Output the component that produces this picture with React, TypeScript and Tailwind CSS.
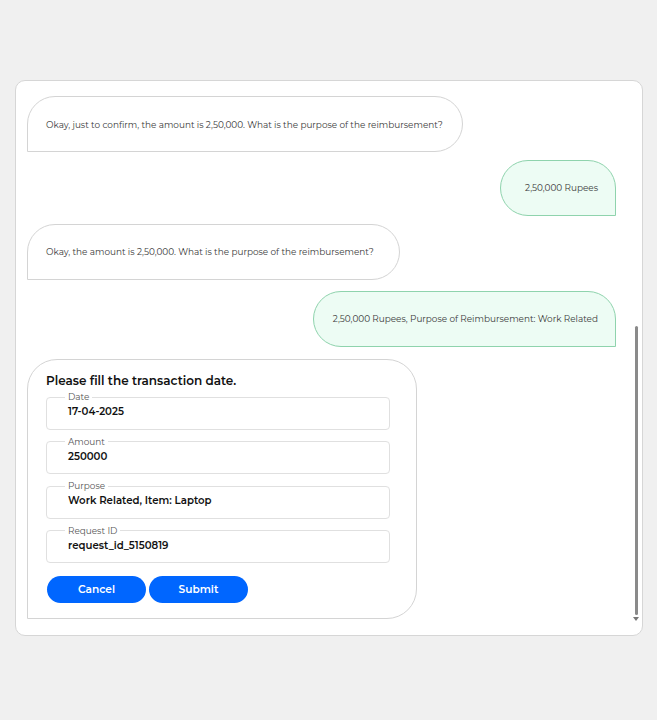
import React from "react";

const font = { fontFamily: "Montserrat, Inter, 'Noto Sans', sans-serif" };

const BotBubble = ({ text, className = "" }: { text: string; className?: string }) => (
  <div
    className={`self-start rounded-[28px] rounded-bl-none border border-[#d4d4d4] bg-white pl-[18px] pr-[19px] text-[8.9px] leading-[14px] text-[#3a3a3a] ${className}`}
  >
    {text}
  </div>
);

const UserBubble = ({ text, className = "" }: { text: string; className?: string }) => (
  <div
    className={`self-end rounded-[28px] rounded-br-none border border-[#8fd3ad] bg-[#edfcf4] py-[20px] pl-[19px] pr-[17px] text-[8.9px] leading-[14px] text-[#3a3a3a] ${className}`}
  >
    {text}
  </div>
);

const Field = ({ label, value }: { label: string; value: string }) => (
  <fieldset className="rounded-[4px] border border-[#e0e0e0] px-[21px] pb-[8.5px]">
    <legend className="-ml-[3px] px-[3px] text-[8.9px] leading-[12px] text-[#555]">
      {label}
    </legend>
    <div className="pt-[1px] text-[10.2px] font-semibold leading-[16px] text-[#111]">
      {value}
    </div>
  </fieldset>
);

export default function App() {
  return (
    <div className="min-h-[720px] bg-[#f0f0f0] px-[15px] pt-[80px]" style={font}>
      <div className="flex h-[556px] w-[628px] rounded-[10px] border border-[#d6d6d6] bg-white">
        <div className="flex flex-1 flex-col pl-[11px] pr-[16px] pt-[15px]">
          <BotBubble
            text="Okay, just to confirm, the amount is 2,50,000. What is the purpose of the reimbursement?"
            className="pb-[19px] pt-[21px]"
          />
          <UserBubble text="2,50,000 Rupees" className="mt-[8px] pl-[24px]" />
          <BotBubble
            text="Okay, the amount is 2,50,000. What is the purpose of the reimbursement?"
            className="mt-[8px] py-[20px] pr-[25px]"
          />
          <UserBubble text="2,50,000 Rupees, Purpose of Reimbursement: Work Related" className="mt-[11px]" />
          <div className="mt-[12px] w-[390px] self-start rounded-[30px] rounded-bl-none border border-[#d4d4d4] bg-white pb-[15px] pl-[18px] pr-[26px] pt-[12px]">
            <div className="text-[12px] font-semibold leading-[18px] text-[#111]">
              Please fill the transaction date.
            </div>
            <div className="mt-[1px] flex flex-col gap-[6px]">
              <Field label="Date" value="17-04-2025" />
              <Field label="Amount" value="250000" />
              <Field label="Purpose" value="Work Related, Item: Laptop" />
              <Field label="Request ID" value="request_id_5150819" />
            </div>
            <div className="mt-[13px] flex gap-[3px] pl-[1px]">
              <button className="h-[27px] w-[99px] rounded-full bg-[#0066ff] text-[10.6px] font-semibold text-white">
                Cancel
              </button>
              <button className="h-[27px] w-[99px] rounded-full bg-[#0066ff] text-[10.6px] font-semibold text-white">
                Submit
              </button>
            </div>
          </div>
        </div>
        <div className="mr-[2px] flex w-[8px] flex-col items-center pt-[245px]">
          <div className="h-[289px] w-[3px] rounded-full bg-[#8a8a8a]" />
          <svg width="6" height="4" viewBox="0 0 6 4" className="mt-[2px]">
            <path d="M0 0h6L3 4z" fill="#777" />
          </svg>
        </div>
      </div>
    </div>
  );
}
